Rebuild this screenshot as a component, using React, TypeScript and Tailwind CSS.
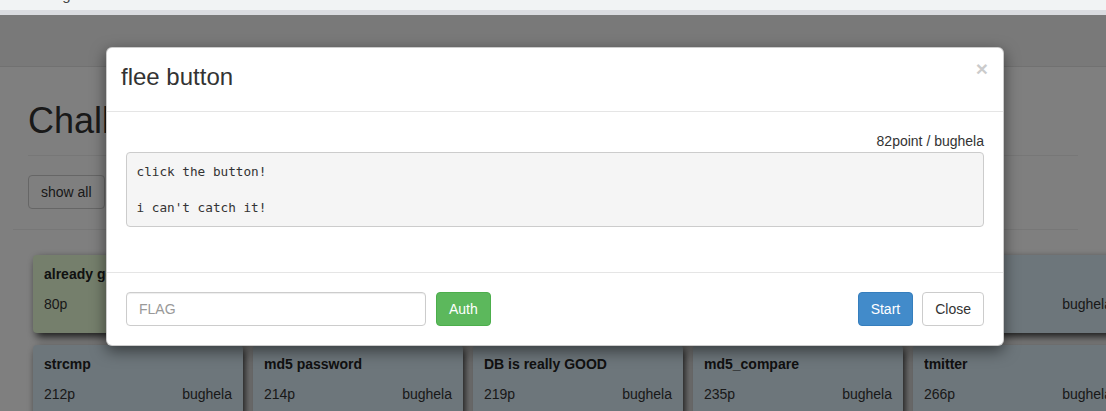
import React from "react";

interface Challenge {
  title: string;
  points: number;
  author: string;
  solved?: boolean;
}

const CHALLENGES: Challenge[] = [
  { title: "already got shell", points: 80, author: "bughela", solved: true },
  { title: "flee button", points: 82, author: "bughela" },
  { title: "login filtering", points: 130, author: "bughela" },
  { title: "simple_sqli", points: 180, author: "bughela" },
  { title: "ls", points: 205, author: "bughela" },
  { title: "hidden", points: 210, author: "bughela" },
  { title: "strcmp", points: 212, author: "bughela" },
  { title: "md5 password", points: 214, author: "bughela" },
  { title: "DB is really GOOD", points: 219, author: "bughela" },
  { title: "md5_compare", points: 235, author: "bughela" },
  { title: "tmitter", points: 266, author: "bughela" },
  { title: "login", points: 300, author: "bughela" },
];

function ChallengeCard({ c }: { c: Challenge }) {
  return (
    <div
      className={`h-[78px] px-[11px] pt-[9px] rounded-[4px] shadow-[3px_4px_8px_rgba(0,0,0,0.8)] ${
        c.solved ? "bg-[#eafed8]" : "bg-[#dbecf6]"
      }`}
    >
      <div className="text-[14px] leading-[20px] font-bold text-[#222] whitespace-nowrap overflow-hidden">{c.title}</div>
      <div className="mt-[10px] flex justify-between text-[14px] leading-[20px] text-[#333]">
        <span>{c.points}p</span>
        <span>{c.author}</span>
      </div>
    </div>
  );
}

export default function App() {
  return (
    <div className="relative w-[1106px] h-[411px] overflow-hidden bg-white font-['Liberation_Sans',Arial,sans-serif]">
      {/* browser address strip, cut off */}
      <div className="h-[10px] bg-[#f1f3f4] overflow-hidden">
        <div className="-mt-[13px] -ml-[2px] text-[15px] leading-[16px] text-[#444]">m/challenge</div>
      </div>
      <div className="h-[5px] bg-[#dadce0]" />

      {/* page behind the modal */}
      <div className="relative h-[396px]">
        <nav className="h-[52px] bg-[#f3f3f3] border-b border-[#e2e2e2]" />
        <main className="px-[28px]">
          <h1 className="mt-[34px] pb-[14px] text-[36px] leading-[40px] text-[#333] border-b border-[#eee]">Challenge</h1>
          <button
            type="button"
            className="mt-[19px] h-[34px] px-[12px] text-[14px] leading-[20px] text-[#333] bg-white border border-[#ccc] rounded-[4px]"
          >
            show all
          </button>
          <div className="mt-[20px] -ml-[15px] border-t border-[#eee]" />
          <div className="mt-[25px] ml-[5px] grid grid-cols-[repeat(6,210px)] gap-x-[10px] gap-y-[12px]">
            {CHALLENGES.map((c, i) => (
              <ChallengeCard key={i} c={c} />
            ))}
          </div>
        </main>
        <div className="absolute inset-0 bg-black/50" />
      </div>

      {/* modal */}
      <div className="absolute left-[106px] top-[47px] w-[898px] bg-white rounded-[6px] border border-black/20 shadow-[0_5px_15px_rgba(0,0,0,0.5)]">
        <div className="h-[64px] flex justify-between items-start pl-[14px] pr-[15px] pt-[15px] border-b border-[#e5e5e5]">
          <h4 className="text-[24px] leading-[27px] text-[#333]">flee button</h4>
          <button type="button" className="-mt-[5px] text-[21px] leading-none font-bold text-black opacity-20">
            ×
          </button>
        </div>
        <div className="px-[19px] pt-[19px] pb-[45px]">
          <div className="text-right text-[14px] leading-[20px] text-[#333]">82point / bughela</div>
          <pre className="mt-[1px] p-[9.5px] bg-[#f5f5f5] border border-[#ccc] rounded-[4px] text-[12.7px] leading-[18px] text-[#333] whitespace-pre-wrap font-['DejaVu_Sans_Mono',monospace]">
            {"click the button!\n\ni can't catch it!"}
          </pre>
        </div>
        <div className="flex justify-between items-center px-[19px] pt-[19px] pb-[19px] border-t border-[#e5e5e5]">
          <div className="flex items-center gap-[10px]">
            <input
              placeholder="FLAG"
              className="w-[300px] h-[34px] px-[12px] text-[14px] text-[#555] placeholder:text-[#999] border border-[#ccc] rounded-[4px] shadow-[inset_0_1px_1px_rgba(0,0,0,0.075)] outline-none"
            />
            <button
              type="button"
              className="h-[34px] px-[12px] text-[14px] leading-[20px] text-white bg-[#5cb85c] border border-[#4cae4c] rounded-[4px]"
            >
              Auth
            </button>
          </div>
          <div className="flex items-center gap-[9px]">
            <button
              type="button"
              className="h-[34px] px-[12px] text-[14px] leading-[20px] text-white bg-[#428bca] border border-[#357ebd] rounded-[4px]"
            >
              Start
            </button>
            <button
              type="button"
              className="h-[34px] px-[12px] text-[14px] leading-[20px] text-[#333] bg-white border border-[#ccc] rounded-[4px]"
            >
              Close
            </button>
          </div>
        </div>
      </div>
    </div>
  );
}
